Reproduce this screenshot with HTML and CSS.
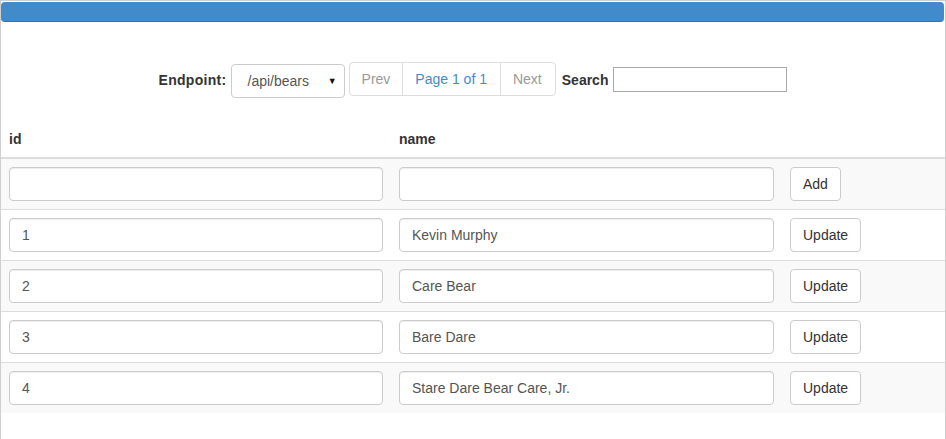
FILE: index.html
```html
<!DOCTYPE html>
<html>
<head>
<meta charset="utf-8">
<link rel="stylesheet" href="styles.css">
</head>
<body>
<div class="frame">
  <div class="topbar"></div>
  <div class="controls">
    <span class="label label-endpoint">Endpoint:</span>
    <div class="select"><span class="select-text">/api/bears</span><span class="select-arrow">▼</span></div>
    <div class="pagination">
      <span class="page-item disabled">Prev</span>
      <span class="page-item current">Page 1 of 1</span>
      <span class="page-item disabled">Next</span>
    </div>
    <span class="label label-search">Search</span>
    <input class="search" type="text">
  </div>
  <table class="grid">
    <colgroup>
      <col class="col-id">
      <col class="col-name">
      <col>
    </colgroup>
    <thead>
      <tr><th>id</th><th>name</th><th></th></tr>
    </thead>
    <tbody>
      <tr><td><input class="field" type="text" value=""></td><td><input class="field" type="text" value=""></td><td><button class="btn">Add</button></td></tr>
      <tr><td><input class="field" type="text" value="1"></td><td><input class="field" type="text" value="Kevin Murphy"></td><td><button class="btn">Update</button></td></tr>
      <tr><td><input class="field" type="text" value="2"></td><td><input class="field" type="text" value="Care Bear"></td><td><button class="btn">Update</button></td></tr>
      <tr><td><input class="field" type="text" value="3"></td><td><input class="field" type="text" value="Bare Dare"></td><td><button class="btn">Update</button></td></tr>
      <tr><td><input class="field" type="text" value="4"></td><td><input class="field" type="text" value="Stare Dare Bear Care, Jr."></td><td><button class="btn">Update</button></td></tr>
    </tbody>
  </table>
</div>
</body>
</html>
```

FILE: styles.css
```css
html, body {
  margin: 0;
  padding: 0;
  background: #fff;
}
body {
  font-family: "Liberation Sans", Arial, sans-serif;
  font-size: 14px;
  line-height: 20px;
  color: #333;
}
.frame {
  border: 1px solid #cfcfcf;
  border-bottom: none;
  min-height: 480px;
}
.topbar {
  margin: 1px 1px 0 0;
  height: 19px;
  background: #418bca;
  border-bottom: 1px solid #3373ac;
  border-radius: 4px;
}
.controls {
  display: flex;
  justify-content: center;
  align-items: flex-start;
  margin-top: 40px;
  height: 36px;
}
.label {
  font-weight: bold;
  color: #333;
  margin-top: 8px;
}
.label-endpoint {
  margin-right: 4px;
  letter-spacing: 0.3px;
}
.select {
  box-sizing: border-box;
  width: 114px;
  height: 34px;
  margin-top: 2px;
  margin-right: 4px;
  border: 1px solid #ccc;
  border-radius: 4px;
  background: #fff;
  display: flex;
  align-items: center;
  padding-left: 16px;
  padding-right: 7px;
  color: #555;
}
.select-text {
  flex: 1;
}
.select-arrow {
  font-size: 9px;
  color: #111;
}
.pagination {
  display: flex;
  margin-right: 6px;
}
.page-item {
  display: block;
  padding: 6px 12px;
  border: 1px solid #ddd;
  margin-left: -1px;
  background: #fff;
  line-height: 20px;
}
.page-item:first-child {
  margin-left: 0;
  border-radius: 4px 0 0 4px;
}
.page-item:last-child {
  border-radius: 0 4px 4px 0;
  padding-right: 13px;
}
.page-item.disabled {
  color: #999;
}
.page-item.current {
  color: #428bca;
  padding-right: 13px;
}
.label-search {
  margin-right: 5px;
}
.search {
  box-sizing: border-box;
  width: 174px;
  height: 25px;
  margin: 5px 0 0 0;
  border: 1px solid #a9a9a9;
  border-radius: 0;
  padding: 1px 2px;
  font: inherit;
  outline: none;
}
.grid {
  width: 100%;
  table-layout: fixed;
  border-collapse: separate;
  border-spacing: 0;
  margin-top: 23px;
}
.col-id {
  width: 390px;
}
.col-name {
  width: 391px;
}
.grid th {
  text-align: left;
  font-weight: bold;
  padding: 8px;
  line-height: 20px;
  border-bottom: 2px solid #ddd;
  color: #333;
}
.grid td {
  padding: 8px;
  border-top: 1px solid #ddd;
  vertical-align: top;
}
.grid tbody tr:first-child td {
  border-top: none;
}
.grid tbody tr:nth-child(odd) td {
  background: #f9f9f9;
}
.field {
  display: block;
  box-sizing: border-box;
  width: 100%;
  height: 34px;
  margin: 0;
  padding: 6px 12px;
  border: 1px solid #ccc;
  border-radius: 4px;
  background: #fff;
  box-shadow: inset 0 1px 1px rgba(0, 0, 0, 0.075);
  font-family: "Liberation Sans", Arial, sans-serif;
  font-size: 14px;
  line-height: 20px;
  color: #555;
  outline: none;
}
.btn {
  display: inline-block;
  box-sizing: border-box;
  height: 34px;
  margin: 0;
  padding: 6px 12px;
  border: 1px solid #ccc;
  border-radius: 4px;
  background: #fff;
  font-family: "Liberation Sans", Arial, sans-serif;
  font-size: 14px;
  line-height: 20px;
  color: #333;
}
```
